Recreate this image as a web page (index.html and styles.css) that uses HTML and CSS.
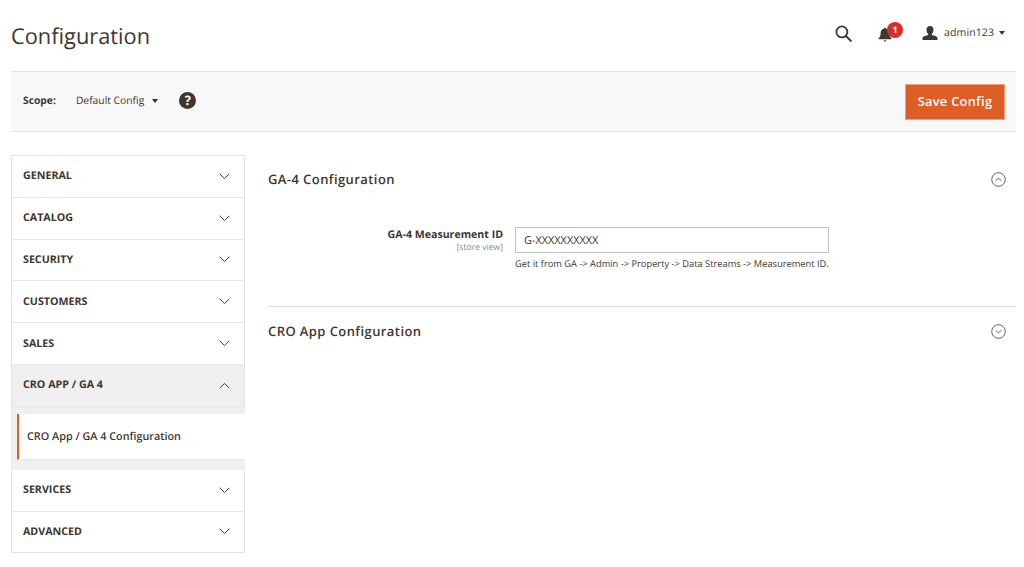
FILE: index.html
```html
<!DOCTYPE html>
<html lang="en">
<head>
<meta charset="utf-8">
<title>Configuration</title>
<link rel="stylesheet" href="styles.css">
</head>
<body>
<div class="page">
  <header class="header">
    <h1 class="title">Configuration</h1>
    <div class="actions">
      <svg class="search" width="17" height="17" viewBox="0 0 18 18"><circle cx="7.300" cy="7.300" r="5.800" fill="none" stroke="#41362f" stroke-width="1.900"/><path d="M11.600 11.600L16.800 16.800" stroke="#41362f" stroke-width="2.200" stroke-linecap="round"/></svg>
      <div class="bell">
        <svg width="14" height="15" viewBox="0 0 14 15"><path d="M7 0.800c.7 0 1.100.4 1.200 1 2.100.5 3.100 2.200 3.200 4.300.1 2.400.4 3.800 2 5.200v1H.6v-1c1.600-1.400 1.900-2.800 2-5.200.1-2.100 1.100-3.800 3.200-4.300.1-.6.5-1 1.200-1z" fill="#41362f"/><path d="M5.600 13.200h2.800a1.400 1.400 0 0 1-2.800 0z" fill="#41362f"/></svg>
        <span class="badge">1</span>
      </div>
      <div class="user">
        <svg width="16" height="14" viewBox="0 0 16 14"><path d="M8 0c2.300 0 3.500 1.500 3.500 3.700 0 1.700-.7 3.300-1.700 4.200v1.200c2.300.6 5 1.400 5.700 2.500V14H.5v-2.400c.7-1.100 3.400-1.900 5.700-2.500V7.900C5.200 7 4.500 5.400 4.500 3.700 4.500 1.500 5.700 0 8 0z" fill="#41362f"/></svg>
        <span class="user-name">admin123</span>
        <span class="caret"></span>
      </div>
    </div>
  </header>

  <div class="toolbar">
    <span class="scope-label">Scope:</span>
    <span class="scope-value">Default Config</span>
    <span class="caret scope-caret"></span>
    <span class="help">?</span>
    <button class="save" type="button">Save Config</button>
  </div>

  <div class="columns">
    <nav class="sidebar">
      <div class="nav-item">GENERAL<svg class="chev" width="11" height="7" viewBox="0 0 11 7"><path d="M.7.8l4.800 4.800L10.300.8"/></svg></div>
      <div class="nav-item">CATALOG<svg class="chev" width="11" height="7" viewBox="0 0 11 7"><path d="M.7.8l4.800 4.800L10.300.8"/></svg></div>
      <div class="nav-item">SECURITY<svg class="chev" width="11" height="7" viewBox="0 0 11 7"><path d="M.7.8l4.800 4.800L10.300.8"/></svg></div>
      <div class="nav-item">CUSTOMERS<svg class="chev" width="11" height="7" viewBox="0 0 11 7"><path d="M.7.8l4.800 4.800L10.300.8"/></svg></div>
      <div class="nav-item">SALES<svg class="chev" width="11" height="7" viewBox="0 0 11 7"><path d="M.7.8l4.800 4.800L10.300.8"/></svg></div>
      <div class="nav-item nav-open">CRO APP / GA 4<svg class="chev" width="11" height="7" viewBox="0 0 11 7"><path d="M.7 6.200L5.500 1.400l4.800 4.800"/></svg></div>
      <div class="sub-wrap"><div class="sub-item">CRO App / GA 4 Configuration</div></div>
      <div class="nav-item">SERVICES<svg class="chev" width="11" height="7" viewBox="0 0 11 7"><path d="M.7.8l4.800 4.800L10.300.8"/></svg></div>
      <div class="nav-item nav-last">ADVANCED<svg class="chev" width="11" height="7" viewBox="0 0 11 7"><path d="M.7.8l4.800 4.800L10.300.8"/></svg></div>
    </nav>

    <main class="main">
      <section class="section section-open">
        <div class="section-head">
          <h2>GA-4 Configuration</h2>
          <svg width="15" height="15" viewBox="0 0 15 15"><circle cx="7.500" cy="7.500" r="6.800" class="ring"/><path d="M4.600 8.800l2.900-2.700 2.900 2.700" class="ring"/></svg>
        </div>
        <div class="field">
          <div class="field-label"><strong>GA-4 Measurement ID</strong><small>[store view]</small></div>
          <div class="field-control">
            <input class="input" type="text" value="G-XXXXXXXXXX">
            <p class="note">Get it from GA -&gt; Admin -&gt; Property -&gt; Data Streams -&gt; Measurement ID.</p>
          </div>
        </div>
      </section>
      <section class="section">
        <div class="section-head">
          <h2>CRO App Configuration</h2>
          <svg width="15" height="15" viewBox="0 0 15 15"><circle cx="7.500" cy="7.500" r="6.800" class="ring"/><path d="M4.600 6.200l2.900 2.700 2.900-2.700" class="ring"/></svg>
        </div>
      </section>
    </main>
  </div>
</div>
</body>
</html>
```
FILE: styles.css
```css
* { box-sizing: border-box; }
html, body { margin: 0; padding: 0; background: #fff; }
body { font-family: "Open Sans", sans-serif; color: #41362f; overflow: hidden; text-rendering: geometricPrecision; }
.page { width: 1024px; height: 567px; padding: 0 8px 0 11px; overflow: hidden; }

.header { height: 71px; display: flex; align-items: flex-start; justify-content: space-between; }
.title { margin: 20px 0 0; font-size: 21.800px; line-height: 33px; font-weight: 400; color: #41362f; }
.actions { display: flex; align-items: center; height: 20px; margin-top: 23px; padding-right: 11px; }
.search { margin-right: 26px; }
.bell { position: relative; width: 14px; height: 15px; margin-right: 30px; margin-top: 2px; }
.bell svg { display: block; }
.badge { position: absolute; left: 9px; top: -5px; width: 16px; height: 16px; border-radius: 50%; background: #d92f2c; color: #fff; font-size: 9px; font-weight: 700; line-height: 16px; text-align: center; }
.user { display: flex; align-items: center; }
.user-name { margin-left: 6px; font-size: 10.500px; letter-spacing: .1px; color: #41362f; }
.caret { display: inline-block; width: 0; height: 0; border-left: 3.500px solid transparent; border-right: 3.500px solid transparent; border-top: 4px solid #41362f; margin-left: 5px; }

.toolbar { height: 61px; display: flex; align-items: center; background: #f8f8f8; border-top: 1px solid #e3e3e3; border-bottom: 1px solid #e3e3e3; padding: 0 11px 2px 12px; }
.scope-label { font-size: 10.300px; font-weight: 700; }
.scope-value { margin-left: 20px; font-size: 10.300px; }
.scope-caret { margin-left: 8px; border-top-color: #303030; }
.help { display: block; width: 17px; height: 17px; margin-left: 21px; border-radius: 50%; background: #41362f; color: #fff; font-size: 13px; font-weight: 700; line-height: 17px; text-align: center; }
.save { margin-left: auto; margin-bottom: -2px; width: 100px; height: 36px; padding: 0 0 1px; border: 1px solid #e9a17f; background: #dd5e26; color: #fff; font-family: inherit; font-size: 12.800px; font-weight: 600; letter-spacing: .3px; }

.columns { display: flex; margin-top: 23px; }
.sidebar { width: 234px; flex: none; border: 1px solid #e3e3e3; border-bottom: none; }
.nav-item { height: 41.800px; display: flex; align-items: center; justify-content: space-between; padding: 0 14px 0 11px; font-size: 10.700px; font-weight: 700; border-bottom: 1px solid #e8e8e8; background: #fff; }
.nav-last { border-bottom: 1px solid #e3e3e3; }
.nav-open { background: #f0f0f0; }
.chev { fill: none; stroke: #41362f; stroke-width: 1; }
.sub-wrap { background: #f0f0f0; padding: 7px 0 10px 6px; margin: 0 -1px; }
.sub-item { height: 46px; display: flex; align-items: center; padding: 1px 0 0 8px; background: #fff; border-left: 2px solid #e0601f; font-size: 10.800px; font-weight: 600; border-bottom: 1px solid #e8e8e8; }

.main { flex: 1; margin-left: 23px; }
.section-head { display: flex; align-items: center; justify-content: space-between; padding-right: 10px; height: 48px; }
.section-head h2 { margin: 0; font-size: 13px; font-weight: 600; letter-spacing: .42px; color: #41362f; }
.ring { fill: none; stroke: #41362f; stroke-width: .8; }
.section-open { border-bottom: 1px solid #dedede; height: 152px; }
.field { display: flex; margin-top: 24px; }
.field-label { width: 235px; flex: none; text-align: right; padding-top: 1px; }
.field-label strong { display: block; font-size: 10.600px; font-weight: 700; line-height: 14px; }
.field-label small { display: block; font-size: 8.600px; color: #8a8a8a; line-height: 10px; }
.field-control { margin-left: 12px; width: 314px; }
.input { display: block; width: 314px; height: 26px; border: 1px solid #c2c2c2; padding: 0 8px; font-family: inherit; font-size: 10.900px; color: #41362f; border-radius: 0; outline: none; background: #fff; text-rendering: geometricPrecision; }
.note { margin: 4px 0 0; font-size: 9.300px; line-height: 13px; color: #41362f; }
```
